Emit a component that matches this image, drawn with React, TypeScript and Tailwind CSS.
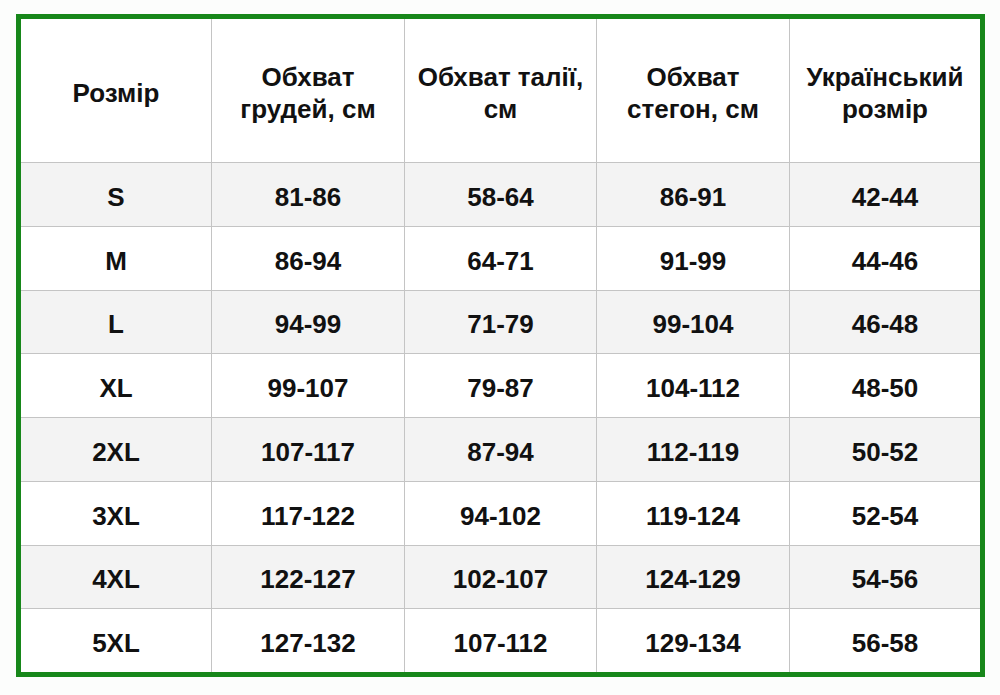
const headers = [
  ["Розмір"],
  ["Обхват", "грудей, см"],
  ["Обхват талії,", "см"],
  ["Обхват", "стегон, см"],
  ["Український", "розмір"],
];

const rows = [
  ["S", "81-86", "58-64", "86-91", "42-44"],
  ["M", "86-94", "64-71", "91-99", "44-46"],
  ["L", "94-99", "71-79", "99-104", "46-48"],
  ["XL", "99-107", "79-87", "104-112", "48-50"],
  ["2XL", "107-117", "87-94", "112-119", "50-52"],
  ["3XL", "117-122", "94-102", "119-124", "52-54"],
  ["4XL", "122-127", "102-107", "124-129", "54-56"],
  ["5XL", "127-132", "107-112", "129-134", "56-58"],
];

export default function App() {
  return (
    <div
      className="w-[1000px] h-[695px] bg-[#fcfdfc] pt-[14px] pl-[16px]"
      style={{ fontFamily: '"Liberation Sans", Arial, sans-serif' }}
    >
      <div className="w-[969px] h-[663px] border-[5px] border-[#17871a] bg-white flex flex-col text-[26px] font-bold text-[#111]">
        <div className="h-[144px] grid grid-cols-[191px_193px_192px_193px_1fr] border-b border-[#c4c4c4]">
          {headers.map((lines, i) => (
            <div
              key={i}
              className={`flex flex-col items-center justify-center text-center leading-[32px] pt-[5px] ${
                i < 4 ? "border-r border-[#c4c4c4]" : ""
              }`}
            >
              {lines.map((l) => (
                <span key={l}>{l}</span>
              ))}
            </div>
          ))}
        </div>
        {rows.map((row, r) => (
          <div
            key={row[0]}
            className={`flex-1 grid grid-cols-[191px_193px_192px_193px_1fr] ${
              r % 2 === 0 ? "bg-[#f3f3f3]" : "bg-white"
            } ${r < rows.length - 1 ? "border-b border-[#c4c4c4]" : ""}`}
          >
            {row.map((cell, i) => (
              <div
                key={i}
                className={`flex items-center justify-center pt-[6px] ${
                  i < 4 ? "border-r border-[#c4c4c4]" : ""
                }`}
              >
                {cell}
              </div>
            ))}
          </div>
        ))}
      </div>
    </div>
  );
}
